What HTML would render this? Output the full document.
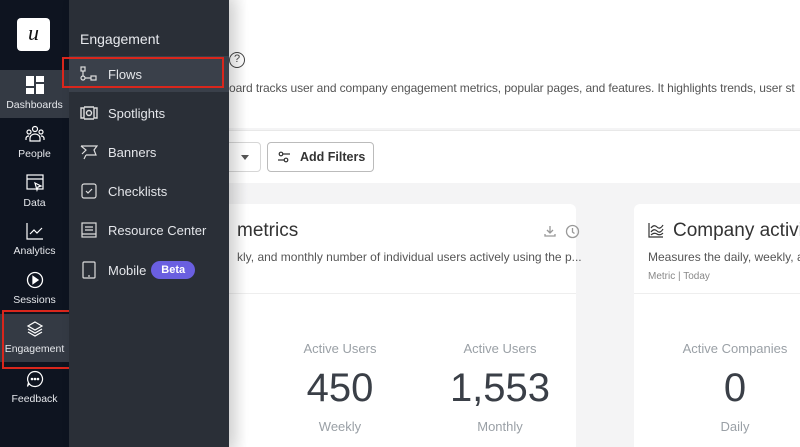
<!DOCTYPE html>
<html><head><style>
*{margin:0;padding:0;box-sizing:border-box}
html,body{width:800px;height:447px;overflow:hidden}
body{font-family:"Liberation Sans",sans-serif;background:#f4f4f5;position:relative}
.rail{position:absolute;left:0;top:0;width:69px;height:447px;background:#0e1420}
.panel{position:absolute;left:69px;top:0;width:160px;height:447px;background:#2a2f37;box-shadow:6px 0 14px rgba(0,0,0,.12)}
.logo{position:absolute;left:17px;top:18px;width:33px;height:33px;background:#fff;border-radius:4px;color:#111;font:italic 22px "Liberation Serif",serif;text-align:center;line-height:30px}
.ri{position:absolute;left:0;width:69px;text-align:center;color:#e6e8ec;font-size:10.5px}
.ri svg{display:block;margin:0 auto 5px}
.pi{position:absolute;left:80px;color:#e4e6ea;font-size:13px;display:flex;align-items:center}
.pi svg{margin-right:10px}
.main{position:absolute;left:229px;top:0;right:0;height:447px;overflow:hidden}
.top{position:absolute;left:0;top:0;right:0;height:128px;background:#fff}
.bar{position:absolute;left:0;top:130px;right:0;height:53px;background:#fff;border-top:1px solid #e8e8e8}
.card{position:absolute;top:204px;height:250px;background:#fff;border-radius:6px}
.g{color:#9aa0a6}
.big{font-size:40px;color:#3a3f47}
</style></head><body>
<div class="main">
 <div class="top">
  <div style="position:absolute;left:0;top:52px;width:16px;height:16px;border:1.5px solid #444;border-radius:50%;font-size:11px;text-align:center;line-height:13px;color:#444">?</div>
  <div style="position:absolute;left:0;top:81px;font-size:12px;color:#555;white-space:nowrap;letter-spacing:-.1px">oard tracks user and company engagement metrics, popular pages, and features. It highlights trends, user st</div>
 </div>
 <div class="bar">
  <div style="position:absolute;left:-10px;top:11px;width:42px;height:30px;border:1px solid #d6d6d6;border-radius:4px"></div>
  <div style="position:absolute;left:12px;top:24px;border:4px solid transparent;border-top:5px solid #555"></div>
  <div style="position:absolute;left:38px;top:11px;width:107px;height:30px;border:1px solid #bbb;border-radius:4px;font-size:12.5px;font-weight:bold;color:#333;line-height:28px;padding-left:32px">Add Filters
   <svg style="position:absolute;left:9px;top:7px" width="14" height="14" viewBox="0 0 14 14" fill="none" stroke="#333" stroke-width="1.2"><circle cx="4" cy="4" r="1.8"/><path d="M6 4h7M1 10h6"/><circle cx="9" cy="10" r="1.8"/></svg></div>
 </div>
 <div class="card" style="left:-20px;width:367px">
  <div style="position:absolute;left:28px;top:16px;font-size:19px;color:#333">metrics</div>
  <svg style="position:absolute;left:334px;top:20px" width="14" height="14" viewBox="0 0 14 14" fill="none" stroke="#999" stroke-width="1.3"><path d="M7 2v7M4 6l3 3 3-3M2 10v2h10v-2"/></svg>
  <svg style="position:absolute;left:356px;top:20px" width="15" height="15" viewBox="0 0 15 15" fill="none" stroke="#999" stroke-width="1.3"><circle cx="7.5" cy="7.5" r="6"/><path d="M7.5 4v4l2 1.5"/></svg>
  <div style="position:absolute;left:28px;top:46px;font-size:12px;color:#555;white-space:nowrap">kly, and monthly number of individual users actively using the p...</div>
  <div style="position:absolute;left:0;top:89px;width:100%;border-top:1px solid #eee"></div>
  <div style="position:absolute;left:71px;top:137px;width:120px;text-align:center;font-size:13px" class="g">Active Users</div>
  <div class="big" style="position:absolute;left:71px;top:162px;width:120px;text-align:center">450</div>
  <div style="position:absolute;left:71px;top:215px;width:120px;text-align:center;font-size:13px" class="g">Weekly</div>
  <div style="position:absolute;left:231px;top:137px;width:120px;text-align:center;font-size:13px" class="g">Active Users</div>
  <div class="big" style="position:absolute;left:231px;top:162px;width:120px;text-align:center">1,553</div>
  <div style="position:absolute;left:231px;top:215px;width:120px;text-align:center;font-size:13px" class="g">Monthly</div>
 </div>
 <div class="card" style="left:405px;width:200px">
  <svg style="position:absolute;left:14px;top:18px" width="16" height="16" viewBox="0 0 16 16" fill="none" stroke="#333" stroke-width="1.2"><path d="M1 1v14h14M3 6q3-4 6-1t6-2M3 10q3-4 6-1t6-2M3 13q3-3 6-1t6-1"/></svg>
  <div style="position:absolute;left:39px;top:16px;font-size:19px;color:#333;white-space:nowrap">Company activit</div>
  <div style="position:absolute;left:14px;top:46px;font-size:12px;color:#555;white-space:nowrap">Measures the daily, weekly, a</div>
  <div style="position:absolute;left:14px;top:67px;font-size:10px;color:#888">Metric | Today</div>
  <div style="position:absolute;left:0;top:89px;width:100%;border-top:1px solid #eee"></div>
  <div style="position:absolute;left:26px;top:137px;width:150px;text-align:center;font-size:13px" class="g">Active Companies</div>
  <div class="big" style="position:absolute;left:26px;top:162px;width:150px;text-align:center">0</div>
  <div style="position:absolute;left:26px;top:215px;width:150px;text-align:center;font-size:13px" class="g">Daily</div>
 </div>
 <div style="position:absolute;left:0;top:0;width:18px;height:447px;background:linear-gradient(90deg,rgba(0,0,0,.07),rgba(0,0,0,0))"></div>
</div>
<div class="rail">
 <div class="logo">u</div>
 <div class="ri" style="top:70px;height:48px;background:#343a44;padding-top:6px"><svg width="18" height="18" viewBox="0 0 18 18" fill="#fff"><rect x="0" y="0" width="8" height="10"/><rect x="10" y="0" width="8" height="6"/><rect x="0" y="12" width="8" height="6"/><rect x="10" y="8" width="8" height="10"/></svg>Dashboards</div>
 <div class="ri" style="top:125px"><svg width="20" height="18" viewBox="0 0 20 18" fill="none" stroke="#fff" stroke-width="1.2"><circle cx="10" cy="4" r="2.5"/><circle cx="4" cy="7" r="2"/><circle cx="16" cy="7" r="2"/><path d="M5 16v-3a5 4 0 0 1 10 0v3zM1 15v-2a3 3 0 0 1 3-2M19 15v-2a3 3 0 0 0-3-2"/></svg>People</div>
 <div class="ri" style="top:174px"><svg width="18" height="18" viewBox="0 0 18 18" fill="none" stroke="#fff" stroke-width="1.2"><rect x="1" y="1" width="16" height="14"/><path d="M1 5h16M9 9l6 3-3 1-1 3z"/></svg>Data</div>
 <div class="ri" style="top:222px"><svg width="18" height="18" viewBox="0 0 18 18" fill="none" stroke="#fff" stroke-width="1.2"><path d="M1 1v16h16M4 12l4-4 3 3 5-5"/></svg>Analytics</div>
 <div class="ri" style="top:271px"><svg width="18" height="18" viewBox="0 0 18 18" fill="none" stroke="#fff" stroke-width="1.3"><circle cx="9" cy="9" r="7.5"/><path d="M7 5.5v7l5-3.5z" fill="#fff"/></svg>Sessions</div>
 <div class="ri" style="top:314px;height:48px;background:#343a44;padding-top:6px"><svg width="18" height="18" viewBox="0 0 18 18" fill="none" stroke="#fff" stroke-width="1.2"><path d="M9 2l7 4-7 4-7-4zM2 9l7 4 7-4M2 12l7 4 7-4"/></svg>Engagement</div>
 <div style="position:absolute;left:2px;top:310px;width:78px;height:59px;border:2px solid #d9261c"></div>
 <div class="ri" style="top:370px"><svg width="18" height="18" viewBox="0 0 18 18" fill="none" stroke="#fff" stroke-width="1.2"><path d="M9 1.5a7.5 7.5 0 1 1-6 12L1.5 16.5l1-4A7.5 7.5 0 0 1 9 1.5z"/><circle cx="6" cy="9" r=".7" fill="#fff"/><circle cx="9" cy="9" r=".7" fill="#fff"/><circle cx="12" cy="9" r=".7" fill="#fff"/></svg>Feedback</div>
</div>
<div class="panel">
 <div style="position:absolute;left:11px;top:31px;color:#e8eaee;font-size:14px">Engagement</div>
 <div style="position:absolute;left:0;top:56px;width:160px;height:36px;background:#3a404a"></div>
</div>
<div style="position:absolute;left:62px;top:57px;width:162px;height:31px;border:2px solid #d9261c"></div>
<div class="pi" style="top:66px"><svg width="18" height="16" viewBox="0 0 18 16" fill="none" stroke="#ddd" stroke-width="1.2"><rect x="1" y="1" width="4" height="4"/><rect x="11" y="10" width="5" height="4"/><circle cx="3" cy="12" r="2"/><path d="M3 5v5M5 12h6"/></svg>Flows</div>
<div class="pi" style="top:105px"><svg width="18" height="16" viewBox="0 0 18 16" fill="none" stroke="#ddd" stroke-width="1.4"><path d="M1 3h3v10H1zM14 3h3v10h-3zM4 2h10M4 14h10"/><circle cx="9" cy="8" r="2.5"/></svg>Spotlights</div>
<div class="pi" style="top:144px"><svg width="18" height="16" viewBox="0 0 18 16" fill="none" stroke="#ddd" stroke-width="1.2"><path d="M1 2h16l-3 4 2 5H6M1 2l5 4-4 4M6 11l-2 4"/></svg>Banners</div>
<div class="pi" style="top:183px"><svg width="18" height="16" viewBox="0 0 18 16" fill="none" stroke="#ddd" stroke-width="1.2"><rect x="2" y="1" width="14" height="14" rx="2"/><path d="M6 8l2 2 4-4"/></svg>Checklists</div>
<div class="pi" style="top:222px"><svg width="18" height="16" viewBox="0 0 18 16" fill="none" stroke="#ddd" stroke-width="1.2"><rect x="2" y="1" width="14" height="14"/><path d="M5 5h8M5 8h8M2 12h14"/></svg>Resource Center</div>
<div class="pi" style="top:261px"><svg width="18" height="18" viewBox="0 0 18 18" fill="none" stroke="#ddd" stroke-width="1.2"><rect x="3" y="1" width="12" height="16" rx="1"/><path d="M8 15h2"/></svg>Mobile<span style="margin-left:5px;background:#6a5fe0;color:#fff;font-size:11px;font-weight:bold;border-radius:10px;padding:3px 10px">Beta</span></div>
</body></html>
